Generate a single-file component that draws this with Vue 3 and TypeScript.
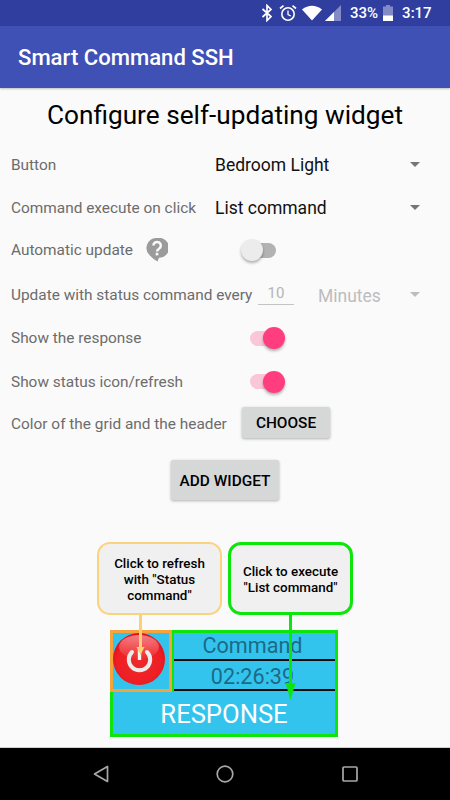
<template>
  <div class="screen">
    <div class="status-bar">
      <!-- bluetooth -->
      <svg class="st-icon" width="12" height="18" viewBox="0 0 12 18">
        <path d="M1.5 5 L10 12.5 L6 16.5 V1.5 L10 5.5 L1.5 13" fill="none" stroke="#fff" stroke-width="1.7" />
      </svg>
      <!-- alarm -->
      <svg class="st-icon alarm" width="18" height="18" viewBox="0 0 18 18">
        <circle cx="9" cy="10" r="6.2" fill="none" stroke="#fff" stroke-width="1.6" />
        <path d="M9 6.5 V10.5 L11.8 12" fill="none" stroke="#fff" stroke-width="1.3" />
        <path d="M1 4.5 L4.5 1.6 M17 4.5 L13.5 1.6" stroke="#fff" stroke-width="1.7" />
      </svg>
      <!-- wifi -->
      <svg class="st-icon wifi" width="20" height="16" viewBox="0 0 20 16">
        <path d="M0 4.5 Q10 -3 20 4.5 L10 15.5 Z" fill="#fff" />
      </svg>
      <!-- signal -->
      <svg class="st-icon signal" width="16" height="16" viewBox="0 0 16 16">
        <path d="M0 16 L16 0 V16 Z" fill="#fff" fill-opacity="0.4" />
        <path d="M0 16 L9 7 V16 Z" fill="#fff" />
      </svg>
      <span class="st-text pct">33%</span>
      <!-- battery -->
      <svg class="st-icon battery" width="10" height="16" viewBox="0 0 10 16">
        <path d="M3 0 H7 V1.5 H10 V16 H0 V1.5 H3 Z" fill="#fff" fill-opacity="0.4" />
        <path d="M0 10.5 H10 V16 H0 Z" fill="#fff" />
      </svg>
      <span class="st-text clock">3:17</span>
    </div>

    <header class="toolbar">Smart Command SSH</header>

    <main class="content">
      <h1 class="title">Configure self-updating widget</h1>

      <div class="row">
        <span class="label select-label">Button</span>
        <span class="select-value">Bedroom Light</span>
        <i class="caret"></i>
      </div>
      <div class="row">
        <span class="label select-label">Command execute on click</span>
        <span class="select-value">List command</span>
        <i class="caret"></i>
      </div>
      <div class="row row-auto">
        <span class="label auto-label">Automatic update</span>
        <svg class="help" width="22" height="24" viewBox="0 0 22 24">
          <path d="M11 0 A10 10 0 1 1 13 19.8 L11.5 23.5 Q7 21 3.6 17.2 A10 10 0 0 1 11 0 Z" fill="#9b9b9b" />
          <path d="M7.4 7.6 A3.7 3.7 0 1 1 13 10.8 Q11 11.8 11 13.6" fill="none" stroke="#fafafa" stroke-width="2.5" />
          <rect x="9.7" y="14.8" width="2.6" height="2.6" fill="#fafafa" />
        </svg>
        <span class="switch off"><i></i></span>
      </div>
      <div class="row row-update">
        <span class="label update-label">Update with status command every</span>
        <span class="num-input">10</span>
        <span class="select-value disabled">Minutes</span>
        <i class="caret light"></i>
      </div>
      <div class="row row-show">
        <span class="label switch-label">Show the response</span>
        <span class="switch on"><i></i></span>
      </div>
      <div class="row row-status">
        <span class="label switch-label">Show status icon/refresh</span>
        <span class="switch on"><i></i></span>
      </div>
      <div class="row row-color">
        <span class="label color-label">Color of the grid and the header</span>
        <button class="btn choose">CHOOSE</button>
      </div>
      <div class="add-row">
        <button class="btn add">ADD WIDGET</button>
      </div>

      <section class="preview">
        <div class="callouts">
          <div class="callout yellow">Click to refresh with "Status command"</div>
          <div class="callout green">Click to execute "List command"</div>
        </div>
        <div class="widget">
          <div class="power">
            <svg width="54" height="54" viewBox="0 0 54 54">
              <defs>
                <radialGradient id="redBall" cx="50%" cy="55%" r="52%">
                  <stop offset="0%" stop-color="#ee2a2a" />
                  <stop offset="80%" stop-color="#ee1f24" />
                  <stop offset="100%" stop-color="#e8101a" />
                </radialGradient>
                <linearGradient id="gloss" x1="0" y1="0" x2="0" y2="1">
                  <stop offset="0%" stop-color="#fff" stop-opacity="0.45" />
                  <stop offset="100%" stop-color="#fff" stop-opacity="0.02" />
                </linearGradient>
              </defs>
              <circle cx="27" cy="27" r="26" fill="url(#redBall)" />
              <ellipse cx="27" cy="15" rx="20" ry="12" fill="url(#gloss)" />
              <path d="M20 20 A10.7 10.7 0 1 0 35 20" fill="none" stroke="#ececec" stroke-width="4" stroke-linecap="round" />
              <rect x="25.8" y="17" width="3.4" height="11" fill="#f4f4f4" />
            </svg>
          </div>
          <div class="cell">Command</div>
          <div class="cell">02:26:39</div>
          <div class="response">RESPONSE</div>
        </div>
        <!-- arrows and outlines drawn over the widget, in page coordinates -->
        <svg class="overlay" width="450" height="215" viewBox="0 530 450 215">
          <path d="M172.5 631.5 H336.5 V735.5 H111.5 V690.5 H172.5 Z" fill="none" stroke="#0ce60c" stroke-width="3" />
          <rect x="111.5" y="631.5" width="59" height="59" fill="none" stroke="#f5a33c" stroke-width="3" />
          <path d="M140.5 615 V650" stroke="#fbd171" stroke-width="3" />
          <path d="M136.5 647 H144.5 L140.5 655 Z" fill="#fbd171" />
          <path d="M290.5 615 V690" stroke="#0ce60c" stroke-width="3" />
          <path d="M285.5 683 H295.5 L290.5 700 Z" fill="#0ce60c" />
        </svg>
      </section>
    </main>

    <nav class="nav-bar">
      <svg width="16" height="18" viewBox="0 0 16 18">
        <path d="M14.5 1.5 V16.5 L1.5 9 Z" fill="none" stroke="#a8a8a8" stroke-width="1.7" stroke-linejoin="round" />
      </svg>
      <svg width="18" height="18" viewBox="0 0 18 18">
        <circle cx="9" cy="9" r="7.8" fill="none" stroke="#a8a8a8" stroke-width="1.7" />
      </svg>
      <svg width="16" height="16" viewBox="0 0 16 16">
        <rect x="1" y="1" width="14" height="14" rx="1" fill="none" stroke="#a8a8a8" stroke-width="1.7" />
      </svg>
    </nav>
  </div>
</template>

<script setup lang="ts">
</script>

<style scoped>
.screen {
  width: 450px;
  height: 800px;
  display: flex;
  flex-direction: column;
  font-family: Roboto, "Liberation Sans", sans-serif;
  background: #fafafa;
  overflow: hidden;
}

.status-bar {
  height: 26px;
  flex: none;
  background: #303f9f;
  display: flex;
  align-items: center;
  padding-left: 261px;
  color: #fff;
}

.st-icon {
  flex: none;
}

.alarm {
  margin-left: 6px;
}

.wifi {
  margin-left: 5px;
}

.signal {
  margin-left: 3px;
}

.st-text {
  font-size: 15px;
  font-weight: 500;
}

.pct {
  margin-left: 9px;
}

.battery {
  margin-left: 5px;
}

.clock {
  margin-left: 9px;
}

.toolbar {
  height: 62px;
  flex: none;
  background: #3f51b5;
  color: #fff;
  font-size: 22.1px;
  font-weight: 500;
  line-height: 63px;
  padding-left: 18px;
  box-sizing: border-box;
  box-shadow: 0 1px 2px rgba(0, 0, 0, 0.25);
}

.content {
  flex: 1;
  min-height: 0;
  color: #616161;
}

.title {
  margin: 0;
  height: 55px;
  line-height: 54px;
  text-align: center;
  font-size: 26.2px;
  font-weight: 400;
  color: #000;
}

.row {
  height: 43px;
  display: flex;
  align-items: center;
  padding-left: 11px;
  position: relative;
}

.label {
  font-size: 15.4px;
  white-space: nowrap;
  color: #6c6c6c;
}

.select-label {
  width: 204px;
}

.auto-label {
  width: 135px;
}

.update-label {
  width: 247px;
}

.switch-label {
  width: 239px;
}

.color-label {
  width: 231px;
}

.select-value {
  font-size: 17.5px;
  color: #111;
}

.select-value.disabled {
  color: #bdbdbd;
  margin-left: 24px;
  margin-top: 2px;
}

.caret {
  position: absolute;
  left: 410px;
  top: 50%;
  margin-top: -3px;
  border-left: 5.5px solid transparent;
  border-right: 5.5px solid transparent;
  border-top: 5.5px solid #757575;
}

.caret.light {
  border-top-color: #bdbdbd;
}

.row-auto {
  height: 42px;
}

.help {
  margin-top: -1px;
}

.switch {
  position: relative;
  display: block;
  height: 15px;
  border-radius: 8px;
}

.switch i {
  position: absolute;
  top: -3.5px;
  width: 22px;
  height: 22px;
  border-radius: 50%;
  box-shadow: 0 2px 3px rgba(0, 0, 0, 0.3);
}

.switch.off {
  width: 31px;
  background: #b2b2b2;
  margin-left: 77px;
}

.switch.off i {
  left: -4px;
  background: #ececec;
}

.switch.on {
  width: 33px;
  background: #fbc6d8;
}

.switch.on i {
  right: -2px;
  background: #ff3d7f;
}

.row-update {
  height: 47px;
}

.num-input {
  width: 36px;
  margin-top: 0;
  padding-bottom: 2px;
  text-align: center;
  font-size: 15px;
  color: #b5b5b5;
  border-bottom: 1px solid #c4c4c4;
}

.row-show {
  height: 40px;
}

.row-status {
  height: 47px;
}

.row-color {
  height: 38px;
}

.btn {
  border: 0;
  border-radius: 2px;
  background: #d6d7d7;
  color: #000;
  font-family: inherit;
  font-size: 15.4px;
  font-weight: 500;
  padding: 0;
  box-shadow: 0 1px 3px rgba(0, 0, 0, 0.3);
}

.choose {
  width: 88px;
  height: 31px;
  margin-top: -3px;
}

.add-row {
  display: flex;
  justify-content: center;
  padding-top: 17px;
}

.add {
  width: 108px;
  height: 40px;
  padding-top: 2px;
}

.preview {
  position: relative;
  margin-top: 42px;
  height: 195px;
}

.callouts {
  display: flex;
  justify-content: center;
  gap: 6px;
}

.callout {
  width: 125px;
  height: 73px;
  box-sizing: border-box;
  border-radius: 13px;
  background: #f0f0f0;
  color: #000;
  font-size: 13.4px;
  font-weight: 500;
  line-height: 16px;
  display: flex;
  align-items: center;
  justify-content: center;
  text-align: center;
  padding: 2px 10px 0;
}

.callout.yellow {
  border: 2px solid #fbd37e;
}

.callout.green {
  border: 3px solid #0ce60c;
}

.widget {
  width: 228px;
  height: 107px;
  margin: 15px 0 0 110px;
  background: #33c4ee;
  display: grid;
  grid-template-columns: 60px 1fr;
  grid-template-rows: 31px 30px 46px;
  box-sizing: border-box;
}

.power {
  grid-row: 1 / 3;
  display: flex;
  align-items: center;
  justify-content: center;
  padding: 0 2px 3px 0;
}

.cell {
  display: flex;
  align-items: center;
  justify-content: center;
  border-bottom: 2px solid #0a0a0a;
  font-size: 21.6px;
  color: #1c6a86;
  box-sizing: border-box;
  padding: 2px 3px 0 0;
}

.response {
  grid-column: 1 / 3;
  text-align: center;
  color: #fff;
  font-size: 25.6px;
  line-height: 46px;
}

.overlay {
  position: absolute;
  left: 0;
  top: -12px;
  pointer-events: none;
}

.nav-bar {
  height: 52px;
  flex: none;
  background: #000;
  box-shadow: 0 -1px 0 #cfcfcf;
  box-sizing: border-box;
  display: flex;
  align-items: center;
  gap: 107px;
  padding: 0 0 1px 93px;
}

.nav-bar svg:last-child {
  margin-left: 1px;
}
</style>

<style>
html,
body {
  margin: 0;
  overflow: hidden;
}
</style>
